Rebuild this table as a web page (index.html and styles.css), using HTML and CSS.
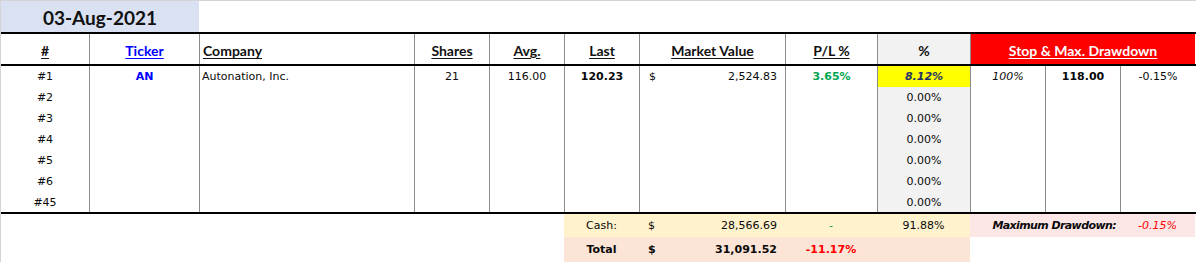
FILE: index.html
```html
<!DOCTYPE html>
<html>
<head>
<meta charset="utf-8">
<title>Portfolio</title>
<link rel="stylesheet" href="styles.css">
</head>
<body>
<div class="sheet">
  <div class="row date-row">
    <div class="c span2 date">03-Aug-2021</div>
  </div>

  <div class="row head lined">
    <div class="c ctr"><span class="ul">#</span></div>
    <div class="c ctr"><span class="ul blue">Ticker</span></div>
    <div class="c left"><span class="ul">Company</span></div>
    <div class="c ctr"><span class="ul">Shares</span></div>
    <div class="c ctr"><span class="ul">Avg.</span></div>
    <div class="c ctr"><span class="ul">Last</span></div>
    <div class="c ctr"><span class="ul">Market Value</span></div>
    <div class="c ctr"><span class="ul">P/L %</span></div>
    <div class="c ctr gray">%</div>
    <div class="c ctr span3 red"><span class="ul">Stop &amp; Max. Drawdown</span></div>
  </div>

  <div class="body">
    <div class="row data lined">
      <div class="c ctr">#1</div>
      <div class="c ctr b blue">AN</div>
      <div class="c left">Autonation, Inc.</div>
      <div class="c ctr">21</div>
      <div class="c ctr">116.00</div>
      <div class="c ctr b">120.23</div>
      <div class="c money"><span>$</span><span>2,524.83</span></div>
      <div class="c ctr b green">3.65%</div>
      <div class="c ctr b i yellow">8.12%</div>
      <div class="c ctr i">100%</div>
      <div class="c ctr b">118.00</div>
      <div class="c ctr">-0.15%</div>
    </div>
    <div class="row data lined">
      <div class="c ctr">#2</div><div class="c"></div><div class="c"></div><div class="c"></div><div class="c"></div><div class="c"></div><div class="c"></div><div class="c"></div>
      <div class="c ctr gray">0.00%</div><div class="c"></div><div class="c"></div><div class="c"></div>
    </div>
    <div class="row data lined">
      <div class="c ctr">#3</div><div class="c"></div><div class="c"></div><div class="c"></div><div class="c"></div><div class="c"></div><div class="c"></div><div class="c"></div>
      <div class="c ctr gray">0.00%</div><div class="c"></div><div class="c"></div><div class="c"></div>
    </div>
    <div class="row data lined">
      <div class="c ctr">#4</div><div class="c"></div><div class="c"></div><div class="c"></div><div class="c"></div><div class="c"></div><div class="c"></div><div class="c"></div>
      <div class="c ctr gray">0.00%</div><div class="c"></div><div class="c"></div><div class="c"></div>
    </div>
    <div class="row data lined">
      <div class="c ctr">#5</div><div class="c"></div><div class="c"></div><div class="c"></div><div class="c"></div><div class="c"></div><div class="c"></div><div class="c"></div>
      <div class="c ctr gray">0.00%</div><div class="c"></div><div class="c"></div><div class="c"></div>
    </div>
    <div class="row data lined">
      <div class="c ctr">#6</div><div class="c"></div><div class="c"></div><div class="c"></div><div class="c"></div><div class="c"></div><div class="c"></div><div class="c"></div>
      <div class="c ctr gray">0.00%</div><div class="c"></div><div class="c"></div><div class="c"></div>
    </div>
    <div class="row data last lined">
      <div class="c ctr">#45</div><div class="c"></div><div class="c"></div><div class="c"></div><div class="c"></div><div class="c"></div><div class="c"></div><div class="c"></div>
      <div class="c ctr gray">0.00%</div><div class="c"></div><div class="c"></div><div class="c"></div>
    </div>
  </div>

  <div class="row cash">
    <div class="c span5"></div>
    <div class="c ctr cream">Cash:</div>
    <div class="c money cream"><span>$</span><span>28,566.69</span></div>
    <div class="c ctr cream green">-</div>
    <div class="c ctr cream">91.88%</div>
    <div class="c span2 right pink b i tight">Maximum Drawdown:</div>
    <div class="c ctr pink i redtxt">-0.15%</div>
  </div>

  <div class="row total">
    <div class="c span5"></div>
    <div class="c ctr peach b">Total</div>
    <div class="c money peach b"><span>$</span><span>31,091.52</span></div>
    <div class="c ctr peach b redtxt">-11.17%</div>
    <div class="c peach"></div>
    <div class="c span3"></div>
  </div>
</div>
</body>
</html>
```

FILE: styles.css
```css
* { box-sizing: border-box; }

html, body {
  margin: 0;
  padding: 0;
  background: #ffffff;
}

body {
  width: 1196px;
  height: 262px;
  overflow: hidden;
  font-family: "DejaVu Sans", Verdana, sans-serif;
  font-size: 11px;
  color: #0a0a0a;
}

.sheet {
  width: 1196px;
  border-top: 1px solid #d4d4d4;
  border-left: 1px solid #d4d4d4;
}

.row {
  display: grid;
  grid-template-columns: 88px 110px 215px 75px 75px 75px 146px 92px 93px 75px 75px 75px;
}

.c {
  display: flex;
  align-items: center;
  white-space: nowrap;
  min-width: 0;
}

.lined > .c + .c { border-left: 1px solid #8c8c8c; }

.span2 { grid-column: span 2; }
.span3 { grid-column: span 3; }
.span5 { grid-column: span 5; }

.ctr { justify-content: center; }
.left { justify-content: flex-start; padding-left: 2px; }
.right { justify-content: flex-end; padding-right: 4px; }

.money {
  justify-content: space-between;
  padding: 0 8px 0 9px;
}

.b { font-weight: bold; }
.i { font-style: italic; }
.tight { letter-spacing: -0.6px; }

/* date */
.date-row { height: 31px; }
.date {
  background: #d9e1f2;
  justify-content: center;
  font-family: "Lato", "Liberation Sans", sans-serif;
  font-weight: bold;
  font-size: 19px;
  color: #111111;
  padding-top: 1px;
}

/* header */
.head {
  height: 34px;
  border-top: 2px solid #000000;
  border-bottom: 2px solid #000000;
  font-family: "Lato", "Liberation Sans", sans-serif;
  font-weight: bold;
  font-size: 14px;
  color: #111111;
}
.head .c { padding-top: 3px; }
.head .left { padding-left: 3px; }
.ul { text-decoration: underline; text-underline-offset: 2px; }

.blue { color: #0000ff; }
.red { background: #ff0000; color: #ffffff; }
.gray { background: #f2f2f2; }

/* data */
.body { border-bottom: 2px solid #000000; }
.data { height: 21px; }
.data.last { height: 20px; }

.green { color: #00a550; }
.yellow { background: #ffff00; color: #1f2f66; }

/* bottom */
.cash { height: 23px; }
.total { height: 25px; }
.cream { background: #fff2cc; }
.peach { background: #fce4d6; }
.pink { background: #fde6e6; }
.redtxt { color: #ff0000; }
```
